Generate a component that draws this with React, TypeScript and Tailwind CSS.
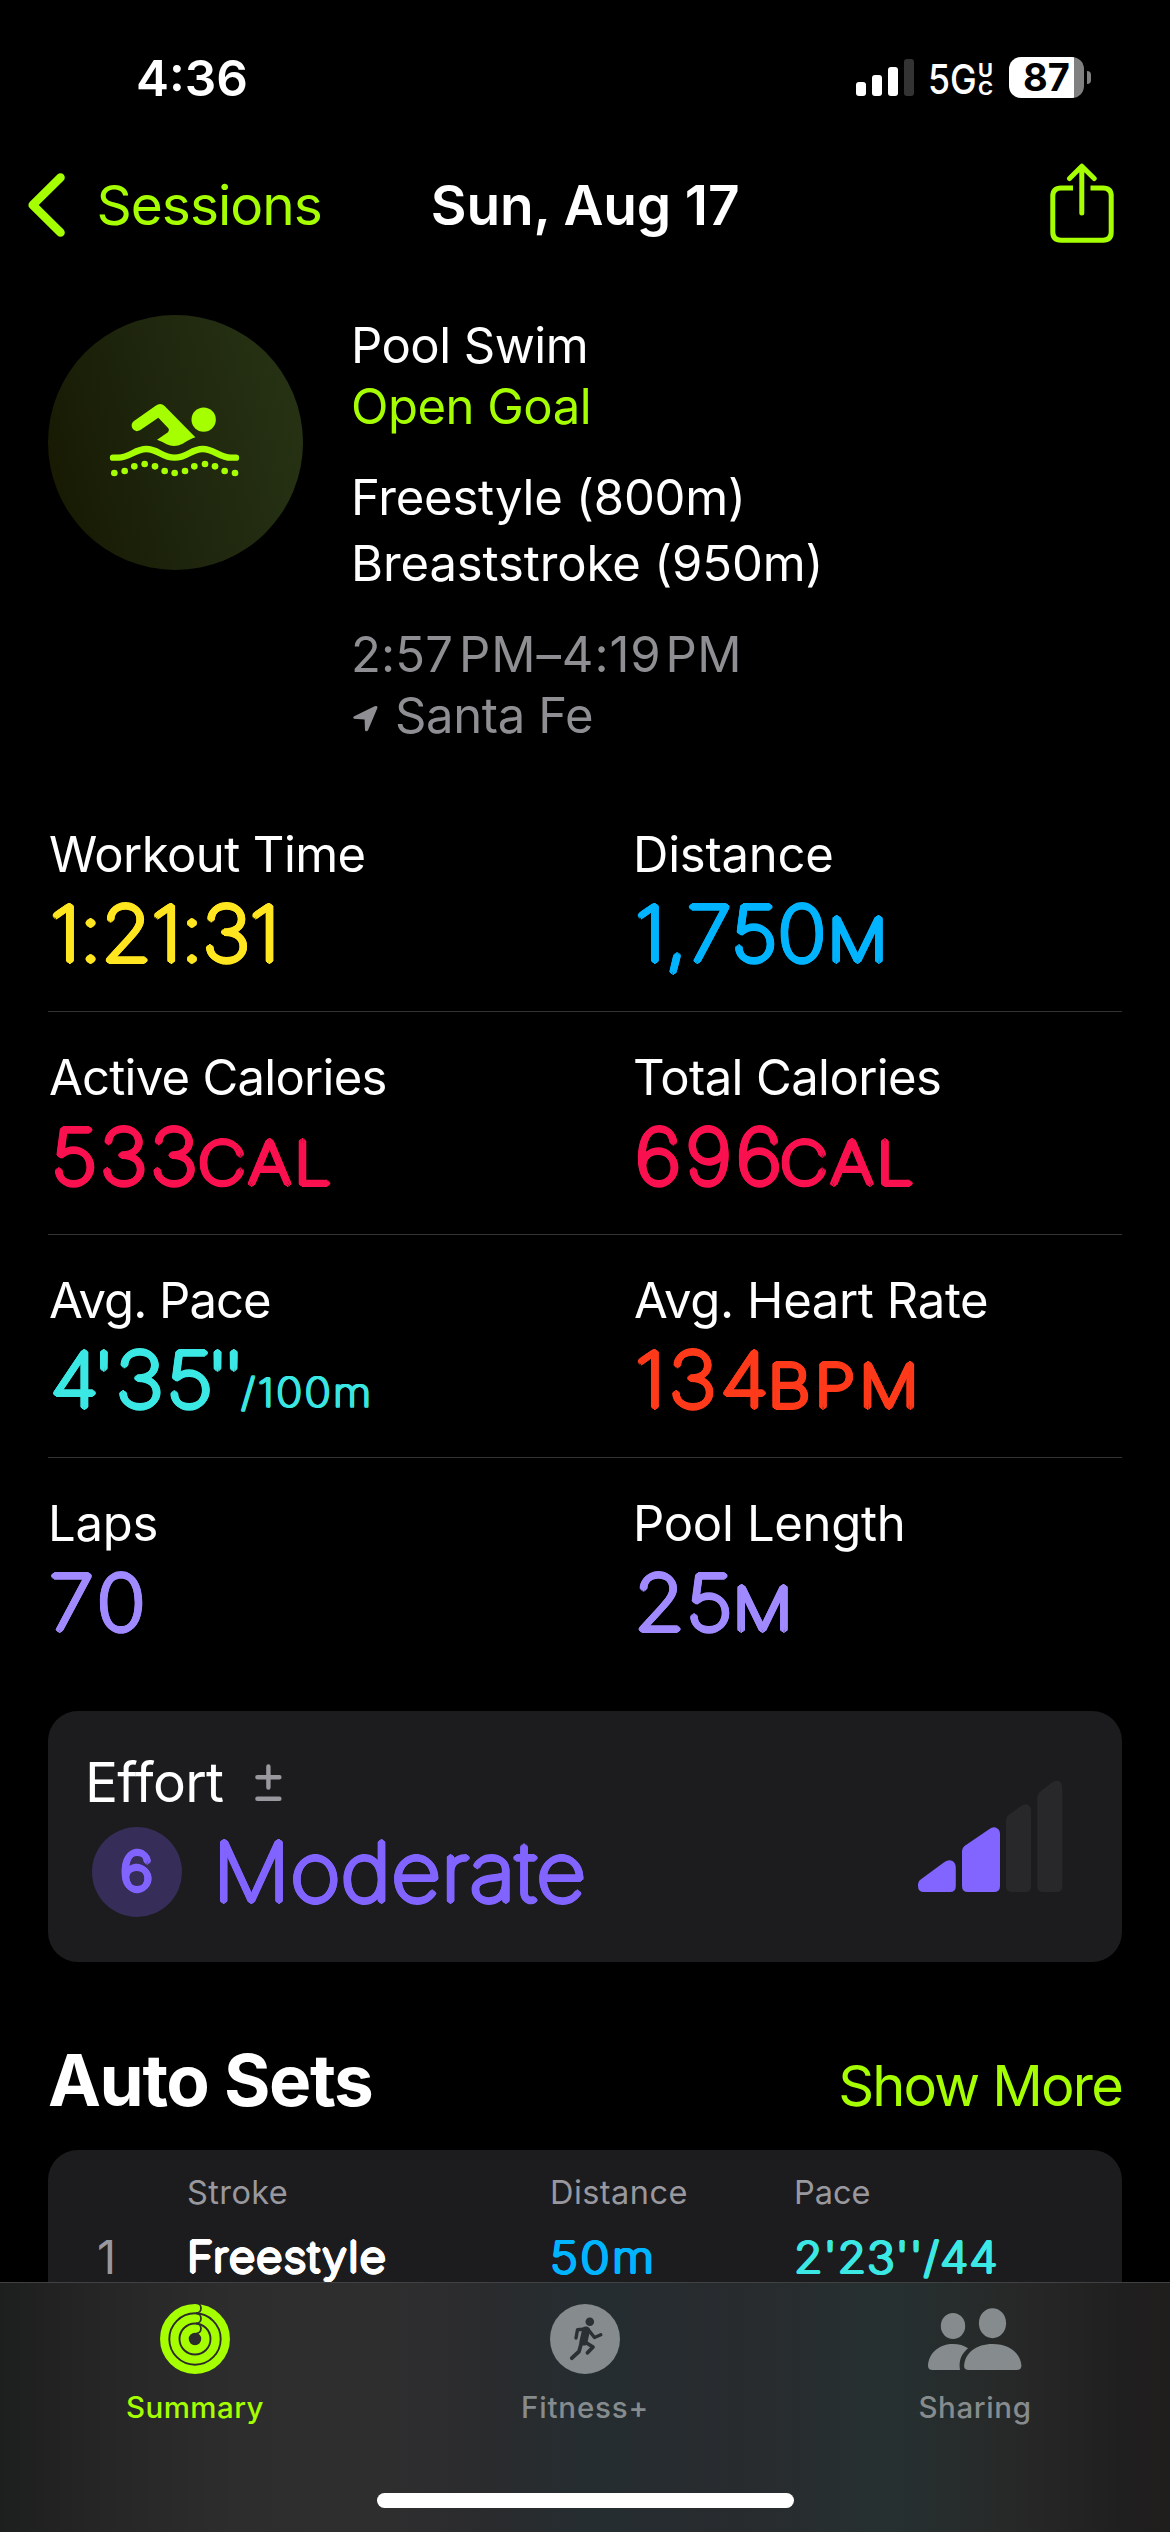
import type { ReactNode } from "react";

// Zero-blur shadows thicken a hairline weight into a stroke with round ends.
const ROUND_LG =
  "font-[100] [text-shadow:2.7px_0_0_currentColor,2.34px_1.35px_0_currentColor,1.35px_2.34px_0_currentColor,0_2.7px_0_currentColor,-1.35px_2.34px_0_currentColor,-2.34px_1.35px_0_currentColor,-2.7px_0_0_currentColor,-2.34px_-1.35px_0_currentColor,-1.35px_-2.34px_0_currentColor,0_-2.7px_0_currentColor,1.35px_-2.34px_0_currentColor,2.34px_-1.35px_0_currentColor]";
const ROUND_MD =
  "font-[200] [text-shadow:1.6px_0_0_currentColor,1.15px_1.15px_0_currentColor,0_1.6px_0_currentColor,-1.15px_1.15px_0_currentColor,-1.6px_0_0_currentColor,-1.15px_-1.15px_0_currentColor,0_-1.6px_0_currentColor,1.15px_-1.15px_0_currentColor]";
const ROUND_SM =
  "[text-shadow:1.4px_0_0_currentColor,1px_1px_0_currentColor,0_1.4px_0_currentColor,-1px_1px_0_currentColor,-1.4px_0_0_currentColor,-1px_-1px_0_currentColor,0_-1.4px_0_currentColor,1px_-1px_0_currentColor]";

function StatusBar() {
  return (
    <div className="flex h-[150px] shrink-0 items-start text-white">
      <div className="mt-[48px] ml-[136px] w-[112px] text-[49.5px]/[60px] font-semibold whitespace-nowrap">4:36</div>
      <svg className="mt-[59px] ml-[608px] h-[37px] w-[59px]" viewBox="0 0 59 37">
        <rect x="0" y="23" width="10" height="14" rx="3" fill="#fff" />
        <rect x="16" y="16" width="10" height="21" rx="3" fill="#fff" />
        <rect x="32" y="8" width="10" height="29" rx="3" fill="#fff" />
        <rect x="48" y="0" width="10" height="37" rx="3" fill="#333" />
      </svg>
      <div className="mt-[54px] ml-[13px] w-[49px] origin-left scale-x-[0.87] text-[41px]/[50px] font-medium">5G</div>
      <div className="mt-[61px] ml-px flex w-[15px] origin-left scale-x-110 flex-col text-[18.5px]/[18px] font-bold">
        <span>U</span>
        <span>C</span>
      </div>
      <div className="mt-[57px] ml-[16px] flex h-[41px] w-[75px] items-center justify-center rounded-[12px] bg-[linear-gradient(90deg,#fff_65px,#808080_65px)] text-[38px]/[41px] font-bold text-black">
        87
      </div>
      <div className="mt-[71px] ml-[3px] h-[13px] w-[4px] rounded-r-full bg-[#808080]" />
    </div>
  );
}

function NavBar() {
  return (
    <div className="flex h-[110px] shrink-0 items-center pr-[56px] pl-[28px] text-[55px]/[60px] whitespace-nowrap">
      <svg className="h-[64px] w-[37px]" viewBox="0 0 37 64">
        <path d="M32.5 4.5 L4.7 32 L32.5 59.5" fill="none" stroke="#a6ff00" strokeWidth="8.6" strokeLinecap="round" strokeLinejoin="round" />
      </svg>
      <span className="ml-[31.5px] tracking-[-0.99px] text-[#a6ff00]">Sessions</span>
      <h1 className="ml-[109px] font-semibold tracking-[-0.15px] text-white">Sun, Aug 17</h1>
      <svg className="mb-[4px] ml-auto h-[80px] w-[64px]" viewBox="0 0 64 80">
        <g fill="none" stroke="#a6ff00" strokeWidth="5">
          <path d="M23 25 H11 Q2.8 25 2.8 33 V69 Q2.8 77.2 11 77.2 H53 Q61.2 77.2 61.2 69 V33 Q61.2 25 53 25 H40.5" />
          <path d="M31.8 50 V3.5 M19.5 15.5 L31.8 3.2 L44.2 15.5" strokeLinecap="round" strokeLinejoin="round" />
        </g>
      </svg>
    </div>
  );
}

const DOTS = [[253, 549], [284, 543], [313, 529], [344, 522], [375, 529], [404, 543], [434, 549], [465, 543], [493, 529], [525, 522], [555, 529], [584, 543], [615, 549]];

function Hero() {
  return (
    <div className="flex shrink-0 pt-[55px] pl-[48px]">
      <div className="h-[255px] w-[255px] rounded-full bg-[linear-gradient(75deg,#181a02_8%,#1d240c_40%,#263113_88%)]">
        <svg className="h-full w-full" viewBox="54 75 765 765" fill="#a6ff00">
          <path d="M312 393 L377 347 Q391 337 403 347 L496 442 Q480 447 458 461 Q433 474 410 463 Q398 455 381 449 L414 427 Q420 421 415 415 L385 383 L330 421 Q315 428 307 415 Q301 402 312 393 Z" />
          <circle cx="521" cy="389" r="36.5" />
          <path d="M249 503 H265 C300 503 315 477 349 477 C385 477 395 503 434 503 C472 503 483 477 518 477 C553 477 568 503 603 503 H618" fill="none" stroke="#a6ff00" strokeWidth="19" strokeLinecap="round" />
          {DOTS.map(([x, y]) => (
            <circle key={x} cx={x} cy={y} r="10" />
          ))}
        </svg>
      </div>
      <div className="ml-[48px] flex flex-col pt-px text-[49px] whitespace-nowrap text-white">
        <div className="h-[61px] leading-[60px] tracking-[-0.52px]">Pool Swim</div>
        <div className="h-[61px] leading-[60px] tracking-[-0.5px] text-[#a6ff00]">Open Goal</div>
        <div className="mt-[30px] h-[66px] leading-[60px] tracking-[-0.2px]">Freestyle (800m)</div>
        <div className="h-[66px] leading-[60px] tracking-[-0.11px]">Breaststroke (950m)</div>
        <div className="mt-[25px] flex h-[61px] leading-[60px] text-[#8e8e93]">
          <span className="mr-[6px] tracking-[0.14px]">2:57</span>
          <span className="mr-[4px] tracking-[0.9px]">PM–4:19</span>
          <span className="tracking-[0.5px]">PM</span>
        </div>
        <div className="flex h-[61px] leading-[60px] tracking-[-0.35px] text-[#8e8e93]">
          <svg className="mt-[19px] mr-[17px] ml-[2px] h-[27px] w-[25px]" viewBox="0 0 25 27" fill="#8e8e93">
            <path d="M1.2 11.2 L21.6 1.2 Q25 0.2 24.3 3.2 L15 25.2 Q13.8 27 12 25.5 L11.6 14.4 L1 13.8 Q-0.6 12.4 1.2 11.2 Z" />
          </svg>
          Santa Fe
        </div>
      </div>
    </div>
  );
}

const NUMBER = "origin-left scale-x-[1.08]";
const UNIT = "origin-left scale-x-[1.13] text-[58.5px]";

function Metric({ label, labelClass, className, children }: { label: string; labelClass: string; className: string; children: ReactNode }) {
  return (
    <div className="whitespace-nowrap">
      <div className={`h-[68px] text-[49px]/[60px] text-white ${labelClass}`}>{label}</div>
      <div className={`flex h-[80px] items-baseline text-[76px]/[80px] ${ROUND_LG} ${className}`}>{children}</div>
    </div>
  );
}

function Metrics() {
  const row = "grid h-[223px] grid-cols-[585px_1fr] pt-[36px]";
  return (
    <div className="mx-[48px] mt-[42px] flex shrink-0 flex-col">
      <div className={`${row} border-b border-[#333335]`}>
        <Metric label="Workout Time" labelClass="pl-[1px] tracking-[-0.56px]" className="pl-[2px] text-[#ffe620]">
          <span className={`${NUMBER} tracking-[-0.6px]`}>1:21:31</span>
        </Metric>
        <Metric label="Distance" labelClass="tracking-[-0.23px]" className="pl-[2px] text-[#00b4ff]">
          <span className={`${NUMBER} tracking-[0.27px]`}>1,750</span>
          <span className={`ml-[15.5px] ${UNIT}`}>M</span>
        </Metric>
      </div>
      <div className={`${row} border-b border-[#333335]`}>
        <Metric label="Active Calories" labelClass="pl-[1px] tracking-[-0.74px]" className="pl-[2.5px] text-[#fa114f]">
          <span className={`${NUMBER} tracking-[2.3px]`}>533</span>
          <span className={`ml-[8.8px] tracking-[3px] ${UNIT}`}>CAL</span>
        </Metric>
        <Metric label="Total Calories" labelClass="tracking-[-0.6px]" className="pl-[1.5px] text-[#fa114f]">
          <span className={`${NUMBER} tracking-[3.8px]`}>696</span>
          <span className={`ml-[5.6px] tracking-[3.2px] ${UNIT}`}>CAL</span>
        </Metric>
      </div>
      <div className={`${row} border-b border-[#333335]`}>
        <Metric label="Avg. Pace" labelClass="pl-[1px] tracking-[-0.98px]" className="pl-[1.5px] text-[#3be8e4]">
          <span className={NUMBER}>
            <span className="tracking-[-5.8px]">4</span>
            <span className="tracking-[0.6px]">'</span>
            <span className="tracking-[2.7px]">3</span>
            <span className="tracking-[-6px]">5</span>
            <span className="tracking-[-5.9px]">''</span>
          </span>
          <span className={`ml-[16.6px] origin-left scale-x-110 text-[40px] tracking-[2.2px] ${ROUND_SM}`}>/100m</span>
        </Metric>
        <Metric label="Avg. Heart Rate" labelClass="pl-[1px] tracking-[-0.38px]" className="pl-[2px] text-[#ff3a1a]">
          <span className={`${NUMBER} tracking-[3.3px]`}>134</span>
          <span className={`ml-[5.5px] tracking-[4px] ${UNIT}`}>BPM</span>
        </Metric>
      </div>
      <div className={row}>
        <Metric label="Laps" labelClass="tracking-[-0.24px]" className="pl-[0.5px] text-[#a18aff]">
          <span className={`${NUMBER} tracking-[3.9px]`}>70</span>
        </Metric>
        <Metric label="Pool Length" labelClass="tracking-[-0.3px]" className="pl-[1px] text-[#a18aff]">
          <span className={`${NUMBER} tracking-[1.1px]`}>25</span>
          <span className={`ml-[7px] ${UNIT}`}>M</span>
        </Metric>
      </div>
    </div>
  );
}

function EffortCard() {
  return (
    <div className="mx-[48px] mt-[30px] flex h-[251px] shrink-0 justify-between rounded-[30px] bg-[#1c1c1e]">
      <div className="pt-[41px]">
        <div className="flex pl-[37px] text-[55px]/[60px] tracking-[-0.71px] text-white">
          Effort
          <svg className="mt-[12px] ml-[32px] h-[38px] w-[27px]" viewBox="0 0 27 38">
            <path d="M2.4 13.2 H24.4 M13.4 2.5 V23.5 M2.4 34.8 H24.4" stroke="#98989e" strokeWidth="4.4" strokeLinecap="round" />
          </svg>
        </div>
        <div className={`mt-[15px] ml-[44px] flex h-[90px] items-center text-[#8264ff] ${ROUND_LG}`}>
          <div className="flex h-[90px] w-[90px] items-center justify-center rounded-full bg-[#362d58] text-[52px]/[60px]">
            <span className="scale-x-110">6</span>
          </div>
          <span className="ml-[30.5px] origin-left scale-x-[1.06] text-[81px]/[90px] tracking-[0.66px]">Moderate</span>
        </div>
      </div>
      <svg className="mt-[69px] mr-[59px] h-[113px] w-[145px]" viewBox="0 0 145 113">
        <g fill="#8264ff">
          <path d="M6 112 Q0 112 0 106 V104 Q0 101 3 99.3 L26.5 82 Q30.5 79 34.5 81 Q37.8 83 37.8 88 V106 Q37.8 112 32 112 Z" />
          <path d="M50 112 Q44 112 44 106 V71 Q44 68 46.5 66 L71.5 49 Q75.5 46 79 48.2 Q82 50 82 54 V106 Q82 112 76 112 Z" />
        </g>
        <g fill="#28282a">
          <path d="M94 112 Q88 112 88 106 V40 Q88 37 90.5 35 L103 26 Q107 23 110.5 25 Q113 27 113 31 V106 Q113 112 107 112 Z" />
          <path d="M125.3 112 Q119.3 112 119.3 106 V17 Q119.3 14 121.8 12 L134 2.5 Q138 -0.5 142 1.5 Q144.3 3.5 144.3 8 V106 Q144.3 112 138.3 112 Z" />
        </g>
      </svg>
    </div>
  );
}

function AutoSets() {
  const grid = "grid grid-cols-[90px_363px_244px_1fr] pl-[49px] whitespace-nowrap";
  return (
    <div className="mx-[48px] mt-[78px] shrink-0">
      <div className="flex h-[110px] items-baseline justify-between">
        <h2 className="text-[71px]/[80px] font-bold tracking-[-1.39px] text-white">Auto Sets</h2>
        <span className="text-[56px]/[80px] tracking-[-1.81px] text-[#a6ff00]">Show More</span>
      </div>
      <div className="h-[260px] rounded-t-[30px] bg-[#1c1c1e] pt-[23px]">
        <div className={`${grid} text-[32.5px]/[40px] text-[#98989e]`}>
          <span />
          <span className="tracking-[0.41px]">Stroke</span>
          <span className="tracking-[0.46px]">Distance</span>
          <span>Pace</span>
        </div>
        <div className={`${grid} mt-[19px] text-[43px]/[50px]`}>
          <span className="text-[47px]/[50px] text-[#98989e]">1</span>
          <span className={`origin-left scale-x-[1.08] text-[42px]/[50px] tracking-[1.1px] text-white ${ROUND_MD}`}>Freestyle</span>
          <span className={`origin-left scale-x-[1.12] font-[200] tracking-[2.3px] text-[#00b4ff] ${ROUND_SM}`}>50m</span>
          <span className={`origin-left scale-x-[1.08] font-[200] tracking-[0.8px] text-[#3be8e4] ${ROUND_SM}`}>2'23''/44</span>
        </div>
      </div>
    </div>
  );
}

function RingsIcon() {
  return (
    <svg className="h-[70px] w-[70px]" viewBox="0 0 70 70" fill="none">
      <g stroke="#a6ff00" strokeWidth="8.3">
        <circle cx="35" cy="35" r="30.8" />
        <circle cx="35" cy="35" r="20.6" />
        <circle cx="35" cy="35" r="10.4" />
      </g>
      <g stroke="#2c2d2d" strokeWidth="1.8">
        <path d="M36 -0.8 A5 5 0 0 1 36 9.2" />
        <path d="M36 9.4 A5 5 0 0 1 36 19.4" />
        <path d="M36 19.6 A5 5 0 0 1 36 29.6" />
      </g>
    </svg>
  );
}

function RunnerIcon() {
  return (
    <svg className="h-[70px] w-[70px]" viewBox="0 0 70 70">
      <circle cx="35" cy="35" r="35" fill="#868b8d" />
      <circle cx="39.8" cy="17.8" r="4.3" fill="#2a3033" />
      <g fill="none" stroke="#2a3033" strokeLinecap="round" strokeLinejoin="round">
        <path d="M36 26.5 L33.5 37.5" strokeWidth="8" />
        <path d="M36 25 L27.5 25.8 L26 34 M38.5 26 L44.5 33.5 L50.8 30.8" strokeWidth="3.4" />
        <path d="M35 38 L43 43 L37.5 48.8 M31.5 38.5 L29 47.5 L21.8 54.2" strokeWidth="3.8" />
      </g>
    </svg>
  );
}

function PeopleIcon() {
  return (
    <svg className="mt-[4px] h-[66px] w-[94px]" viewBox="0 0 94 66" fill="#868b8d">
      <ellipse cx="64.5" cy="15.2" rx="13.6" ry="15" />
      <ellipse cx="25" cy="18" rx="12.2" ry="13" />
      <path d="M41 62 Q36 62 36.1 57.5 C37 45 48 36 64.7 36 C81 36 92.5 45 93.4 57.5 Q93.4 62 88.5 62 Z" />
      <path d="M4.5 62 Q0 62 0 57.5 C1 44 12 36 25 36 C31 36 36 37.5 40 40.3 C33.5 46 30.5 52 32 62 Z" />
    </svg>
  );
}

function TabBar() {
  const tab = "flex flex-col items-center text-[29.5px]/[40px] font-medium";
  return (
    <div className="flex h-[250px] shrink-0 flex-col items-center border-t border-[#404142] bg-[linear-gradient(90deg,#1d1e1e_0%,#262627_9%,#2d2d2e_20%,#2e2e2f_33%,#2a2b2d_42%,#252d31_50%,#282b2e_63%,#263031_76%,#272928_86%,#201f1f_96%,#1f1e1d_100%)]">
      <div className="grid w-full grid-cols-3 pt-[21px]">
        <div className={`${tab} text-[#a6ff00]`}>
          <RingsIcon />
          <span className="mt-[13px] tracking-[0.45px]">Summary</span>
        </div>
        <div className={`${tab} text-[#868b8d]`}>
          <RunnerIcon />
          <span className="mt-[13px] tracking-[0.83px]">Fitness+</span>
        </div>
        <div className={`${tab} text-[#868b8d]`}>
          <PeopleIcon />
          <span className="mt-[13px] tracking-[0.63px]">Sharing</span>
        </div>
      </div>
      <div className="mt-[66px] h-[15px] w-[417px] rounded-full bg-white" />
    </div>
  );
}

export default function App() {
  return (
    <div className="flex h-[2532px] w-[1170px] flex-col overflow-hidden bg-black font-['Inter',sans-serif]">
      <main className="flex min-h-0 flex-1 flex-col overflow-hidden">
        <StatusBar />
        <NavBar />
        <Hero />
        <Metrics />
        <EffortCard />
        <AutoSets />
      </main>
      <TabBar />
    </div>
  );
}
